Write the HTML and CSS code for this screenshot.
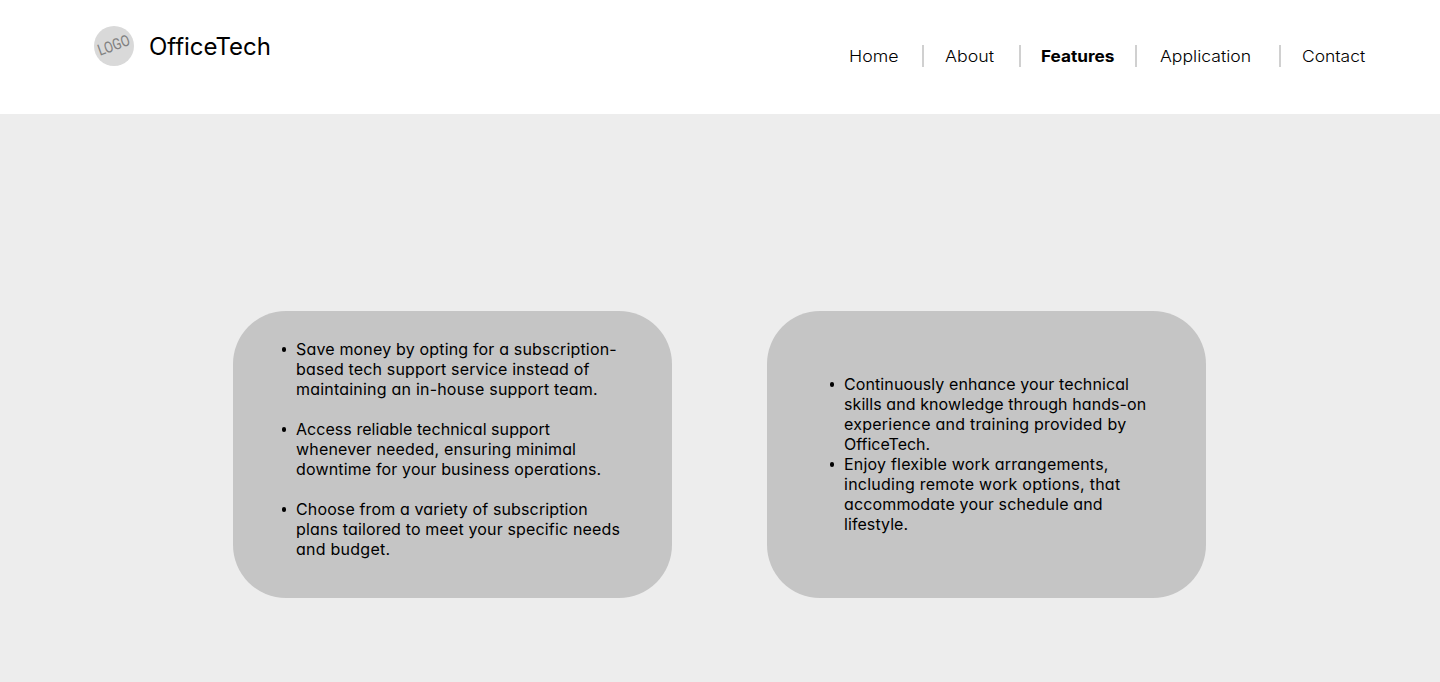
FILE: index.html
```
<!DOCTYPE html>
<html lang="en">
<head>
<meta charset="utf-8">
<title>OfficeTech</title>
<link rel="stylesheet" href="styles.css">
</head>
<body>
<header class="header">
  <div class="brand">
    <svg class="logo" width="40" height="40" viewBox="0 0 40 40">
      <circle cx="20" cy="20" r="20" fill="#d9d9d9"/>
      <text class="logo-text" x="3.5" y="24.5" textLength="33" lengthAdjust="spacingAndGlyphs" transform="rotate(-20 20 20)">LOGO</text>
    </svg>
    <span class="name">OfficeTech</span>
  </div>
  <nav class="nav">
    <a class="link home"><span>Home</span></a>
    <a class="link about"><span>About</span></a>
    <a class="link features"><span>Features</span></a>
    <a class="link application"><span>Application</span></a>
    <a class="link contact"><span>Contact</span></a>
  </nav>
</header>
<main class="main">
  <section class="card benefits">
    <ul class="list">
      <li><span class="s17">Save money by opting for a subscription-</span><span class="s15">based tech support service instead of</span><span class="s21">maintaining an in-house support team.</span></li>
      <li><span class="s05">Access reliable technical support</span><span class="s17">whenever needed, ensuring minimal</span><span class="s15">downtime for your business operations.</span></li>
      <li><span class="s13">Choose from a variety of subscription</span><span class="s15">plans tailored to meet your specific needs</span><span class="s25">and budget.</span></li>
    </ul>
  </section>
  <section class="card growth">
    <ul class="list">
      <li><span class="s10">Continuously enhance your technical</span><span class="s08">skills and knowledge through hands-on</span><span class="s25">experience and training provided by</span><span class="s00">OfficeTech.</span></li>
      <li><span class="s21">Enjoy flexible work arrangements,</span><span class="s25">including remote work options, that</span><span class="s15">accommodate your schedule and</span><span class="s08">lifestyle.</span></li>
    </ul>
  </section>
</main>
</body>
</html>
```
FILE: styles.css
```
* { box-sizing: border-box; }
body {
  margin: 0;
  height: 682px;
  display: flex;
  flex-direction: column;
  font-family: Inter, "Liberation Sans", sans-serif;
  color: #000;
  background: #ededed;
  overflow: hidden;
}
.header {
  height: 114px;
  flex: none;
  background: #fff;
  display: flex;
  justify-content: space-between;
  align-items: flex-start;
  padding: 26px 0 0 94px;
}
.brand { display: flex; align-items: center; gap: 15px; height: 40px; }
.logo { display: block; overflow: visible; }
.logo-text { font: 400 15.5px Roboto, sans-serif; fill: #808080; }
.name { font-size: 24px; line-height: 30px; padding-top: 1px; font-weight: 430; letter-spacing: -0.05px; }

.nav { display: flex; margin-top: 19px; line-height: 22px; font-size: 16px; }
.link { height: 22px; border-right: 2px solid #d0d0d0; white-space: nowrap; }
.link span { display: inline-block; transform: scaleX(1.11); transform-origin: left; font-weight: 350; }
.home { width: 76px; padding-left: 1px; }
.about { width: 97px; padding-left: 21px; }
.features { width: 116px; padding-left: 20px; }
.features span { font-weight: 700; transform: scaleX(1.075); }
.application { width: 144px; padding-left: 23px; }
.application span { transform: scaleX(1.1); }
.contact { width: 159px; padding-left: 21px; border-right: 0; }
.contact span { transform: scaleX(1.09); }

.main { display: flex; gap: 95px; padding: 197px 0 0 233px; }
.card { width: 439px; height: 287px; border-radius: 53px; background: #c5c5c5; }
.benefits { padding: 28px 0 0 48px; }
.growth { padding: 63px 0 0 62px; }
.list {
  margin: 0;
  padding: 0;
  list-style: none;
  font-size: 16px;
  line-height: 20px;
  font-feature-settings: "cv11" 1, "ss01" 1;
}
.benefits .list { display: grid; gap: 20px; }
.list li { display: grid; grid-template-columns: 15px 1fr; }
.list li::before {
  content: "";
  grid-column: 1;
  grid-row: 1;
  width: 4.4px;
  height: 4.4px;
  margin: 8.3px 0 0 0.8px;
  border-radius: 50%;
  background: #000;
}
.list span { grid-column: 2; white-space: nowrap; }
.s00 { letter-spacing: 0; }
.s05 { letter-spacing: 0.05px; }
.s08 { letter-spacing: 0.08px; }
.s10 { letter-spacing: 0.1px; }
.s13 { letter-spacing: 0.13px; }
.s15 { letter-spacing: 0.15px; }
.s17 { letter-spacing: 0.17px; }
.s21 { letter-spacing: 0.21px; }
.s25 { letter-spacing: 0.25px; }
```
